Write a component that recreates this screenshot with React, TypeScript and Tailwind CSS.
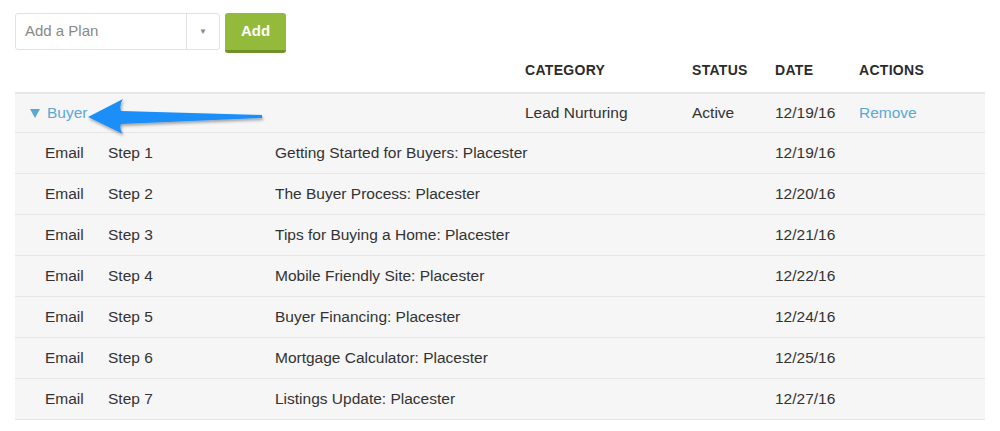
import React from 'react';

const steps = [
  { step: 'Step 1', title: 'Getting Started for Buyers: Placester', date: '12/19/16' },
  { step: 'Step 2', title: 'The Buyer Process: Placester', date: '12/20/16' },
  { step: 'Step 3', title: 'Tips for Buying a Home: Placester', date: '12/21/16' },
  { step: 'Step 4', title: 'Mobile Friendly Site: Placester', date: '12/22/16' },
  { step: 'Step 5', title: 'Buyer Financing: Placester', date: '12/24/16' },
  { step: 'Step 6', title: 'Mortgage Calculator: Placester', date: '12/25/16' },
  { step: 'Step 7', title: 'Listings Update: Placester', date: '12/27/16' },
];

const App: React.FC = () => {
  return (
    <div className="relative w-[1000px] h-[431px] bg-white text-[#333] text-[15.5px] font-['Liberation_Sans',Arial,sans-serif]">
      <div className="flex items-start gap-[5px] pt-[13px] pl-[15px]">
        <div className="flex w-[205px] h-[37px] border border-[#e2e2e2] rounded-[3px] bg-white">
          <div className="flex-1 flex items-center pl-[9px] text-[#888] text-[15px]">Add a Plan</div>
          <div className="w-[33px] border-l border-[#e2e2e2] flex items-center justify-center">
            <span className="text-[#888] text-[8px]">▼</span>
          </div>
        </div>
        <button className="w-[61px] h-[40px] rounded-[3px] bg-[#94ba3c] border-b-[3px] border-[#6f9128] text-white font-bold text-[15px]">
          Add
        </button>
      </div>

      <div className="ml-[15px] w-[970px] mt-[2px]">
        <div className="flex items-center h-[37px] pb-[6px] font-bold text-[14px] tracking-[0.3px] text-[#2b2b2b]">
          <div className="w-[510px]" />
          <div className="w-[167px]">CATEGORY</div>
          <div className="w-[83px]">STATUS</div>
          <div className="w-[84px]">DATE</div>
          <div>ACTIONS</div>
        </div>
        <div className="flex items-center h-[41px] bg-[#f6f6f6] border-t-2 border-b border-[#e6e6e6]">
          <div className="w-[510px] flex items-center pl-[15px] text-[#5aa8d6]">
            <svg width="10" height="9" viewBox="0 0 10 9" className="mr-[7px]">
              <path d="M0,0 L10,0 L5,9 Z" fill="#5aa8d6" />
            </svg>
            <span>Buyer</span>
          </div>
          <div className="w-[167px]">Lead Nurturing</div>
          <div className="w-[83px]">Active</div>
          <div className="w-[84px]">12/19/16</div>
          <div className="text-[#5aa8d6]">Remove</div>
        </div>
        {steps.map((s) => (
          <div key={s.step} className="flex items-center h-[41px] bg-[#f6f6f6] border-b border-[#e6e6e6]">
            <div className="w-[93px] pl-[30px]">Email</div>
            <div className="w-[167px]">{s.step}</div>
            <div className="w-[500px]">{s.title}</div>
            <div>{s.date}</div>
          </div>
        ))}
      </div>

      <svg className="absolute left-0 top-0 pointer-events-none" width="300" height="150" viewBox="0 0 300 150">
        <defs>
          <filter id="sh" x="-20%" y="-50%" width="140%" height="200%">
            <feDropShadow dx="1" dy="2" stdDeviation="1.5" floodColor="#000" floodOpacity="0.35" />
          </filter>
        </defs>
        <path
          d="M88,117 L123,99 Q119,105 121,111 L262,115 L262,118 L121,124 Q119,129 123,134 Z"
          fill="#1d8ef8"
          filter="url(#sh)"
        />
      </svg>
    </div>
  );
};

export default App;
